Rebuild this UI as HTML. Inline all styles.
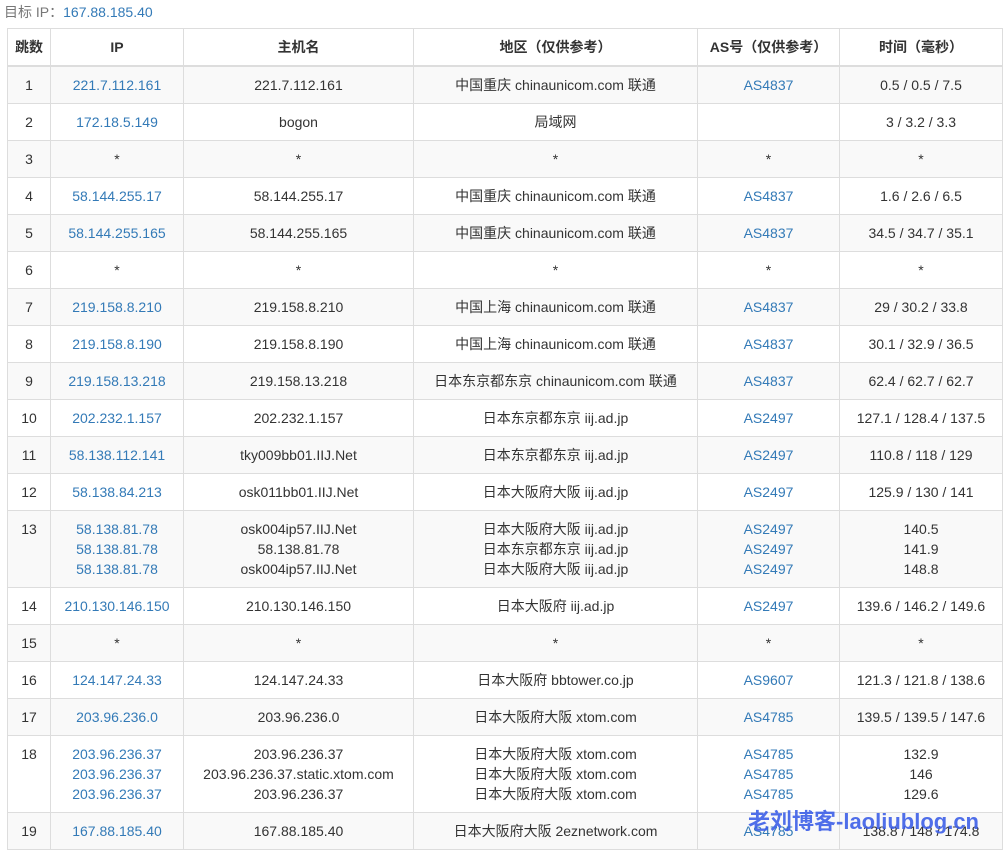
<!DOCTYPE html>
<html><head><meta charset="utf-8"><style>
body{margin:0;background:#fff;font-family:"Liberation Sans","Noto Sans CJK SC",sans-serif;font-size:14px;color:#333;position:relative;width:1008px;height:856px;overflow:hidden}
.t{position:absolute;left:4px;top:2px;color:#777;font-size:14px;line-height:20px}
.t span{color:#337ab7}
table{position:absolute;left:7px;top:28px;border-collapse:collapse;table-layout:fixed;width:995px}
td,th{border:1px solid #ddd;padding:8px 4px;line-height:20px;text-align:center;vertical-align:top;white-space:nowrap;overflow:hidden}
th{border-bottom:2px solid #ddd;font-weight:bold}
tbody tr:nth-child(odd){background:#f9f9f9}
a{color:#337ab7;text-decoration:none}
.wm{position:absolute;left:748px;top:804px;font-size:22px;font-weight:bold;color:#3d5fe8;opacity:.9}
</style></head><body>
<div class="t">目标 IP：<span>167.88.185.40</span></div>
<table>
<colgroup><col style="width:43px"><col style="width:133px"><col style="width:230px"><col style="width:284px"><col style="width:142px"><col style="width:163px"></colgroup>
<thead><tr><th>跳数</th><th>IP</th><th>主机名</th><th>地区（仅供参考）</th><th>AS号（仅供参考）</th><th>时间（毫秒）</th></tr></thead>
<tbody>
<tr><td>1</td><td><a>221.7.112.161</a></td><td>221.7.112.161</td><td>中国重庆 chinaunicom.com 联通</td><td><a>AS4837</a></td><td>0.5 / 0.5 / 7.5</td></tr>
<tr><td>2</td><td><a>172.18.5.149</a></td><td>bogon</td><td>局域网</td><td></td><td>3 / 3.2 / 3.3</td></tr>
<tr><td>3</td><td>*</td><td>*</td><td>*</td><td>*</td><td>*</td></tr>
<tr><td>4</td><td><a>58.144.255.17</a></td><td>58.144.255.17</td><td>中国重庆 chinaunicom.com 联通</td><td><a>AS4837</a></td><td>1.6 / 2.6 / 6.5</td></tr>
<tr><td>5</td><td><a>58.144.255.165</a></td><td>58.144.255.165</td><td>中国重庆 chinaunicom.com 联通</td><td><a>AS4837</a></td><td>34.5 / 34.7 / 35.1</td></tr>
<tr><td>6</td><td>*</td><td>*</td><td>*</td><td>*</td><td>*</td></tr>
<tr><td>7</td><td><a>219.158.8.210</a></td><td>219.158.8.210</td><td>中国上海 chinaunicom.com 联通</td><td><a>AS4837</a></td><td>29 / 30.2 / 33.8</td></tr>
<tr><td>8</td><td><a>219.158.8.190</a></td><td>219.158.8.190</td><td>中国上海 chinaunicom.com 联通</td><td><a>AS4837</a></td><td>30.1 / 32.9 / 36.5</td></tr>
<tr><td>9</td><td><a>219.158.13.218</a></td><td>219.158.13.218</td><td>日本东京都东京 chinaunicom.com 联通</td><td><a>AS4837</a></td><td>62.4 / 62.7 / 62.7</td></tr>
<tr><td>10</td><td><a>202.232.1.157</a></td><td>202.232.1.157</td><td>日本东京都东京 iij.ad.jp</td><td><a>AS2497</a></td><td>127.1 / 128.4 / 137.5</td></tr>
<tr><td>11</td><td><a>58.138.112.141</a></td><td>tky009bb01.IIJ.Net</td><td>日本东京都东京 iij.ad.jp</td><td><a>AS2497</a></td><td>110.8 / 118 / 129</td></tr>
<tr><td>12</td><td><a>58.138.84.213</a></td><td>osk011bb01.IIJ.Net</td><td>日本大阪府大阪 iij.ad.jp</td><td><a>AS2497</a></td><td>125.9 / 130 / 141</td></tr>
<tr><td>13</td><td><a>58.138.81.78</a><br><a>58.138.81.78</a><br><a>58.138.81.78</a></td><td>osk004ip57.IIJ.Net<br>58.138.81.78<br>osk004ip57.IIJ.Net</td><td>日本大阪府大阪 iij.ad.jp<br>日本东京都东京 iij.ad.jp<br>日本大阪府大阪 iij.ad.jp</td><td><a>AS2497</a><br><a>AS2497</a><br><a>AS2497</a></td><td>140.5<br>141.9<br>148.8</td></tr>
<tr><td>14</td><td><a>210.130.146.150</a></td><td>210.130.146.150</td><td>日本大阪府 iij.ad.jp</td><td><a>AS2497</a></td><td>139.6 / 146.2 / 149.6</td></tr>
<tr><td>15</td><td>*</td><td>*</td><td>*</td><td>*</td><td>*</td></tr>
<tr><td>16</td><td><a>124.147.24.33</a></td><td>124.147.24.33</td><td>日本大阪府 bbtower.co.jp</td><td><a>AS9607</a></td><td>121.3 / 121.8 / 138.6</td></tr>
<tr><td>17</td><td><a>203.96.236.0</a></td><td>203.96.236.0</td><td>日本大阪府大阪 xtom.com</td><td><a>AS4785</a></td><td>139.5 / 139.5 / 147.6</td></tr>
<tr><td>18</td><td><a>203.96.236.37</a><br><a>203.96.236.37</a><br><a>203.96.236.37</a></td><td>203.96.236.37<br>203.96.236.37.static.xtom.com<br>203.96.236.37</td><td>日本大阪府大阪 xtom.com<br>日本大阪府大阪 xtom.com<br>日本大阪府大阪 xtom.com</td><td><a>AS4785</a><br><a>AS4785</a><br><a>AS4785</a></td><td>132.9<br>146<br>129.6</td></tr>
<tr><td>19</td><td><a>167.88.185.40</a></td><td>167.88.185.40</td><td>日本大阪府大阪 2eznetwork.com</td><td><a>AS4785</a></td><td>138.8 / 148 / 174.8</td></tr>
</tbody></table>
<div class="wm">老刘博客-laoliublog.cn</div>
</body></html>
